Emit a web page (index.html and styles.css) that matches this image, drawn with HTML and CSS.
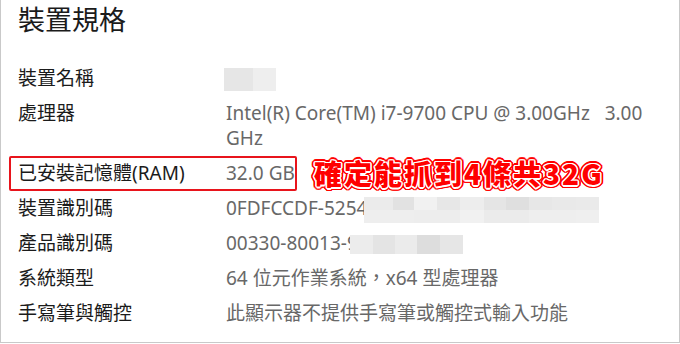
FILE: index.html
```html
<!DOCTYPE html>
<html lang="zh-Hant">
<head>
    <meta charset="UTF-8">
    <meta name="viewport" content="width=device-width, initial-scale=1.0">
    <title>裝置規格</title>
    <link rel="stylesheet" href="styles.css">
</head>
<body>
    <div class="frame">
        <h1 class="page-title">裝置規格</h1>

        <!-- Spec list -->
        <div class="specs">
            <div class="spec-row">
                <div class="spec-label">裝置名稱</div>
                <div class="spec-value"><span class="mosaic mosaic-name"></span></div>
            </div>
            <div class="spec-row">
                <div class="spec-label">處理器</div>
                <div class="spec-value cpu">Intel(R) Core(TM) i7-9700 CPU @ 3.00GHz   3.00 GHz</div>
            </div>
            <div class="spec-row marked">
                <div class="spec-label">已安裝記憶體(RAM)</div>
                <div class="spec-value">32.0 GB</div>
                <div class="note">確定能抓到4條共32G</div>
            </div>
            <div class="spec-row">
                <div class="spec-label">裝置識別碼</div>
                <div class="spec-value">0FDFCCDF-5254<span class="mosaic mosaic-device"></span></div>
            </div>
            <div class="spec-row">
                <div class="spec-label">產品識別碼</div>
                <div class="spec-value">00330-80013-9<span class="mosaic mosaic-product"></span></div>
            </div>
            <div class="spec-row">
                <div class="spec-label">系統類型</div>
                <div class="spec-value">64 位元作業系統，x64 型處理器</div>
            </div>
            <div class="spec-row">
                <div class="spec-label">手寫筆與觸控</div>
                <div class="spec-value">此顯示器不提供手寫筆或觸控式輸入功能</div>
            </div>
        </div>
    </div>
</body>
</html>
```

FILE: styles.css
```css
body {
    margin: 0;
    background-color: #fff;
    font-family: "Noto Sans", "Noto Sans CJK TC", sans-serif;
}

.frame {
    width: 680px;
    height: 343px;
    box-sizing: border-box;
    border: 1px solid #c9c9c9;
    border-top: none;
    padding-left: 17px;
    overflow: hidden;
}

.page-title {
    margin: 0;
    padding-top: 2px;
    font-family: "Noto Sans CJK TC", sans-serif;
    font-size: 27px;
    font-weight: 400;
    line-height: 34px;
    color: #1b1b1b;
}

.specs {
    margin-top: 25px;
}

.spec-row {
    display: grid;
    grid-template-columns: 208px 420px;
    padding: 5px 0;
    font-size: 19px;
    line-height: 25px;
}

.spec-label {
    color: #1b1b1b;
}

.spec-value {
    color: #686868;
}

.cpu {
    white-space: pre-wrap;
}

/* pixelated blur over private values */
.mosaic {
    display: inline-block;
    vertical-align: middle;
}

.mosaic-name {
    width: 52px;
    height: 23px;
    margin: -4px 0 -4px -2px;
    background: linear-gradient(to right, #e6e6e6 0 29px, #eeeeee 29px);
}

.mosaic-device {
    width: 235px;
    height: 26px;
    margin: -4px 0 -4px -3px;
    background:
        linear-gradient(to right, #ebebeb 0 29px, #e2e2e2 29px 50px, #f1f1f1 50px 73px, #e7e7e7 73px 96px, #ededed 96px 120px, #e5e5e5 120px 142px, #dfdfdf 142px 165px, #e7e7e7 165px 188px, #e9e9e9 188px 212px, #eaeaea 212px) top / 100% 50% no-repeat,
        linear-gradient(to right, #eeeeee 0 50px, #ededed 50px 96px, #f1f1f1 96px 120px, #ebebeb 120px 165px, #eeeeee 165px 212px, #efefef 212px) bottom / 100% 50% no-repeat;
}

.mosaic-product {
    width: 113px;
    height: 19px;
    margin-left: -8px;
    background: linear-gradient(to right, #ececec 0 23px, #e4e4e4 23px 45px, #ebebeb 45px 67px, #dddddd 67px 90px, #e6e6e6 90px);
}

/* red annotation around the RAM row */
.marked {
    position: relative;
}

.marked::before {
    content: "";
    position: absolute;
    top: 0;
    left: -9px;
    width: 288px;
    height: 35px;
    box-sizing: border-box;
    border: 2px solid #e8141c;
    border-radius: 2px;
}

.note {
    position: absolute;
    left: 296px;
    top: 1px;
    font-family: "Noto Sans CJK TC", sans-serif;
    font-size: 28px;
    font-weight: 900;
    line-height: 32px;
    letter-spacing: 2px;
    color: #ff0000;
    white-space: nowrap;
    text-shadow:
        1.5px 0 0 #fff, -1.5px 0 0 #fff, 0 1.5px 0 #fff, 0 -1.5px 0 #fff,
        1px 1px 0 #fff, -1px 1px 0 #fff, 1px -1px 0 #fff, -1px -1px 0 #fff,
        3px 0 0 #f00, -3px 0 0 #f00, 0 3px 0 #f00, 0 -3px 0 #f00,
        2px 2px 0 #f00, -2px 2px 0 #f00, 2px -2px 0 #f00, -2px -2px 0 #f00,
        3px 1px 0 #f00, -3px 1px 0 #f00, 3px -1px 0 #f00, -3px -1px 0 #f00,
        1px 3px 0 #f00, -1px 3px 0 #f00, 1px -3px 0 #f00, -1px -3px 0 #f00;
}
```
